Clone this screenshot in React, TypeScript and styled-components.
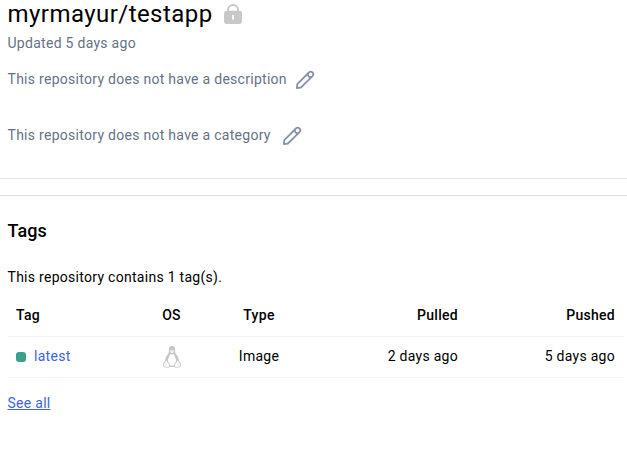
import React from "react";
import styled, { createGlobalStyle } from "styled-components";

const GlobalStyle = createGlobalStyle`
  * { box-sizing: border-box; }
  body {
    margin: 0;
    background: #fff;
    color: #000;
    font-family: Roboto, "Liberation Sans", sans-serif;
    font-size: 14px;
    letter-spacing: 0.28px;
    overflow: hidden;
  }
`;

const Page = styled.main`
  width: 100%;
  height: 470px;
`;

const RepoHeader = styled.header`
  height: 179px;
  padding: 0 7.5px;
  border-bottom: 1px solid #e0e0e0;
`;

const TitleRow = styled.div`
  display: flex;
  align-items: center;
  gap: 11px;
  height: 28px;
`;

const Title = styled.h1`
  margin: 0;
  font-size: 24px;
  font-weight: 400;
  line-height: 28px;
  letter-spacing: 0.45px;
`;

const Updated = styled.div`
  margin-top: 5px;
  line-height: 20px;
  color: #677285;
`;

const EmptyField = styled.div<{ $top: number; $gap: number }>`
  display: flex;
  align-items: center;
  gap: ${(p) => p.$gap}px;
  height: 20px;
  margin-top: ${(p) => p.$top}px;
  line-height: 20px;
  color: #677285;
`;

const EditButton = styled.button`
  display: flex;
  padding: 0;
  margin-top: 2px;
  border: 0;
  background: none;
  color: #8993a5;
`;

const TagsSection = styled.section`
  margin-top: 16px;
  padding: 23px 3px 0 7.5px;
  border-top: 1px solid #e0e0e0;
`;

const SectionTitle = styled.h2`
  margin: 0;
  font-size: 18px;
  font-weight: 500;
  line-height: 24px;
  letter-spacing: 0.1px;
`;

const Summary = styled.p`
  margin: 24px 0 8px;
  line-height: 20px;
`;

const Table = styled.table`
  width: 616px;
  margin-left: 0.5px;
  table-layout: fixed;
  border-collapse: separate;
  border-spacing: 0;
`;

const Cell = styled.td<{ $align?: "center" | "right" }>`
  height: 41px;
  padding: 0 9px 2px 8px;
  border-bottom: 1px solid #f3f3f4;
  text-align: ${(p) => p.$align ?? "left"};
  line-height: 20px;
  vertical-align: middle;
`;

const HeadCell = styled(Cell)`
  height: 42px;
  font-weight: 500;
`;

const TagName = styled.div`
  display: flex;
  align-items: center;
  gap: 8px;
`;

const StatusDot = styled.span`
  width: 10px;
  height: 10px;
  margin-top: 2px;
  border-radius: 3px;
  background: #3aa08c;
`;

const Link = styled.a<{ $underlined?: boolean }>`
  color: #3c64e4;
  text-decoration: ${(p) => (p.$underlined ? "underline" : "none")};
`;

const SeeAll = styled.div`
  margin-top: 15px;
  line-height: 20px;
`;

const IconSvg = styled.svg`
  display: block;
`;

const PenguinSvg = styled(IconSvg)`
  margin: 2px auto 0;
`;

const LockIcon = () => (
  <IconSvg width="18" height="20" viewBox="0 0 18 20">
    <path d="M4 8V6a5 5 0 0 1 10 0v2" fill="none" stroke="#c8c8c8" strokeWidth="2" />
    <rect x="0" y="6.8" width="18" height="13.2" rx="3" fill="#c8c8c8" />
    <rect x="8" y="11" width="2" height="4.5" rx="0.6" fill="#fff" />
  </IconSvg>
);

const PencilIcon = () => (
  <EditButton aria-label="Edit">
    <IconSvg
      width="20"
      height="20"
      viewBox="0 0 20 20"
      fill="none"
      stroke="currentColor"
      strokeWidth="1.8"
      strokeLinejoin="round"
      strokeLinecap="round"
    >
      <path d="M1.9 18.1 2.3 14.1 13.9 2.5a2.5 2.5 0 0 1 3.6 3.6L5.9 17.5Z" />
      <path d="M12.9 3.5c-.6 2 1.3 4.2 3.6 3.6" />
    </IconSvg>
  </EditButton>
);

const LinuxIcon = () => (
  <PenguinSvg width="18" height="22" viewBox="0 0 18 22">
    <path
      d="M9 0C6.8 0 5.8 1.5 5.9 4c.1 2.2-.1 3.2-1.4 4.8C3 10.9 1.8 13.2 2.1 16l4 5h5.8l4-5c.3-2.8-.9-5.1-2.4-7.2-1.3-1.6-1.5-2.6-1.4-4.8C12.2 1.5 11.2 0 9 0Z"
      fill="#c6c6c6"
    />
    <path d="M7.2 8c1.1.8 2.5.8 3.6 0 .6 2.7 2.5 4.4 2.3 7.4-.2 2.5-1.8 4.4-4.1 4.4s-3.9-1.9-4.1-4.4C4.7 12.4 6.6 10.7 7.2 8Z" fill="#fff" />
    <path d="M7 4.6c0-.9 1.3-1 1.6 0h.8c.3-1 1.6-.9 1.6 0L10.8 6 9 7.4 7.2 6Z" fill="#f0f0f0" />
    <path
      d="M3.1 14.1c.9 0 3 3.8 3.5 4.9.6 1.6-.5 2.7-2.2 2.4-1.3-.3-3.1-.7-3.8-1.2-.6-.5.2-1.5-.1-2.7-.2-1 .8-1 1.5-1.4.6-.4.4-2 1.1-2ZM14.9 14.1c-.9 0-3 3.8-3.5 4.9-.6 1.6.5 2.7 2.2 2.4 1.3-.3 3.1-.7 3.8-1.2.6-.5-.2-1.5.1-2.7.2-1-.8-1-1.5-1.4-.6-.4-.4-2-1.1-2Z"
      fill="#fff"
      stroke="#c6c6c6"
      strokeWidth="1"
    />
  </PenguinSvg>
);

const tags = [{ name: "latest", type: "Image", pulled: "2 days ago", pushed: "5 days ago" }];

export default function App() {
  return (
    <Page>
      <GlobalStyle />
      <RepoHeader>
        <TitleRow>
          <Title>myrmayur/testapp</Title>
          <LockIcon />
        </TitleRow>
        <Updated>Updated 5 days ago</Updated>
        <EmptyField $top={16} $gap={8}>
          This repository does not have a description
          <PencilIcon />
        </EmptyField>
        <EmptyField $top={36} $gap={11}>
          This repository does not have a category
          <PencilIcon />
        </EmptyField>
      </RepoHeader>
      <TagsSection>
        <SectionTitle>Tags</SectionTitle>
        <Summary>This repository contains 1 tag(s).</Summary>
        <Table>
          <colgroup>
            <col width="128" />
            <col width="72" />
            <col width="103" />
            <col width="156" />
            <col width="157" />
          </colgroup>
          <thead>
            <tr>
              <HeadCell as="th">Tag</HeadCell>
              <HeadCell as="th" $align="center">OS</HeadCell>
              <HeadCell as="th" $align="center">Type</HeadCell>
              <HeadCell as="th" $align="right">Pulled</HeadCell>
              <HeadCell as="th" $align="right">Pushed</HeadCell>
            </tr>
          </thead>
          <tbody>
            {tags.map((tag) => (
              <tr key={tag.name}>
                <Cell>
                  <TagName>
                    <StatusDot />
                    <Link>{tag.name}</Link>
                  </TagName>
                </Cell>
                <Cell $align="center">
                  <LinuxIcon />
                </Cell>
                <Cell $align="center">{tag.type}</Cell>
                <Cell $align="right">{tag.pulled}</Cell>
                <Cell $align="right">{tag.pushed}</Cell>
              </tr>
            ))}
          </tbody>
        </Table>
        <SeeAll>
          <Link $underlined>See all</Link>
        </SeeAll>
      </TagsSection>
    </Page>
  );
}
